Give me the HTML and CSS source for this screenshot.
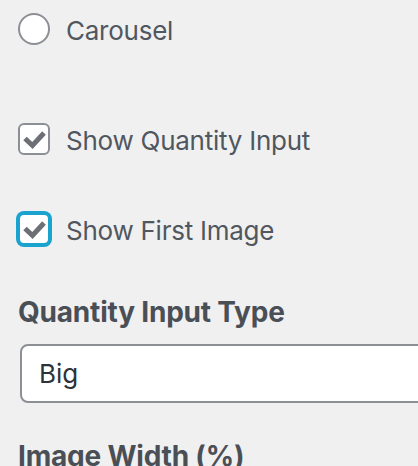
FILE: index.html
```html
<!DOCTYPE html>
<html>
<head>
<meta charset="utf-8">
<link rel="stylesheet" href="styles.css">
</head>
<body>
<div class="panel">
  <label class="opt opt-radio">
    <span class="radio"></span>
    <span class="label">Carousel</span>
  </label>
  <label class="opt opt-check1">
    <span class="check">
      <svg viewBox="0 0 28 28" width="28" height="28"><polyline points="5,13.5 12.5,20.5 24,8" fill="none" stroke="#6c7075" stroke-width="5" stroke-linejoin="miter" stroke-linecap="butt"/></svg>
    </span>
    <span class="label">Show Quantity Input</span>
  </label>
  <label class="opt opt-check2">
    <span class="check focus">
      <svg viewBox="0 0 28 28" width="28" height="28"><polyline points="5,13.5 12.5,20.5 24,8" fill="none" stroke="#6c7075" stroke-width="5" stroke-linejoin="miter" stroke-linecap="butt"/></svg>
    </span>
    <span class="label">Show First Image</span>
  </label>
  <h4 class="heading h-qty">Quantity Input Type</h4>
  <div class="select"><span>Big</span></div>
  <h4 class="heading h-img">Image Width (%)</h4>
</div>
</body>
</html>
```
FILE: styles.css
```css
html, body {
  margin: 0;
  padding: 0;
  background: #f0f0f1;
  overflow: hidden;
}
.panel {
  padding-left: 18px;
  padding-top: 13px;
  font-family: Inter, "Noto Sans", sans-serif;
  color: #50575e;
  display: flex;
  flex-direction: column;
  width: 600px;
}
.opt {
  display: flex;
  align-items: center;
  gap: 16px;
  height: 32px;
}
.label {
  font-size: 26px;
  line-height: 32px;
  letter-spacing: -0.25px;
  position: relative;
  top: 2px;
}
.opt-check1 { margin-top: 78px; }
.opt-check2 { margin-top: 58px; }
.radio {
  box-sizing: border-box;
  width: 32px;
  height: 32px;
  border: 2px solid #8c8f94;
  border-radius: 50%;
  background: #fff;
  flex: none;
}
.check {
  box-sizing: border-box;
  width: 32px;
  height: 32px;
  border: 2px solid #8c8f94;
  border-radius: 6px;
  background: #fff;
  flex: none;
  display: flex;
  align-items: center;
  justify-content: center;
}
.check.focus {
  border-color: #1aa3cf;
  box-shadow: 0 0 0 2px #1aa3cf;
  border-width: 2px;
}
.heading {
  margin: 0;
  font-size: 28px;
  font-weight: 700;
  color: #4a4f55;
  line-height: 32px;
  letter-spacing: -0.2px;
}
.h-qty { margin-top: 51px; }
.select {
  box-sizing: border-box;
  margin-left: 2px;
  margin-top: 16px;
  width: 440px;
  height: 59px;
  border: 2px solid #8c8f94;
  border-radius: 8px;
  background: #fff;
  display: flex;
  align-items: center;
  padding-left: 17px;
  font-size: 26px;
  color: #2c3338;
}
.h-img { margin-top: 37px; }
```
